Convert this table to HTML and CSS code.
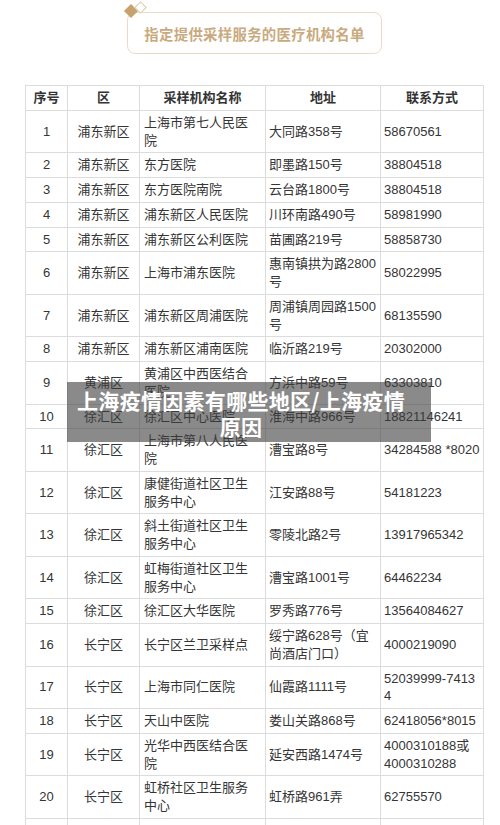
FILE: index.html
```html
<!DOCTYPE html>
<html lang="zh">
<head>
<meta charset="utf-8">
<link rel="stylesheet" href="styles.css">
</head>
<body>
<div class="page">
  <div class="title-wrap">
    <div class="title-box">
      <span class="deco deco-gold"></span>
      <span class="deco deco-white"></span>
      <span class="title-text">指定提供采样服务的医疗机构名单</span>
    </div>
  </div>
  <table class="list">
    <colgroup>
      <col class="c1"><col class="c2"><col class="c3"><col class="c4"><col class="c5">
    </colgroup>
    <thead>
      <tr><th>序号</th><th>区</th><th>采样机构名称</th><th>地址</th><th>联系方式</th></tr>
    </thead>
    <tbody>
      <tr><td class="ctr">1</td><td class="ctr">浦东新区</td><td>上海市第七人民医院</td><td>大同路358号</td><td>58670561</td></tr>
      <tr><td class="ctr">2</td><td class="ctr">浦东新区</td><td>东方医院</td><td>即墨路150号</td><td>38804518</td></tr>
      <tr><td class="ctr">3</td><td class="ctr">浦东新区</td><td>东方医院南院</td><td>云台路1800号</td><td>38804518</td></tr>
      <tr><td class="ctr">4</td><td class="ctr">浦东新区</td><td>浦东新区人民医院</td><td>川环南路490号</td><td>58981990</td></tr>
      <tr><td class="ctr">5</td><td class="ctr">浦东新区</td><td>浦东新区公利医院</td><td>苗圃路219号</td><td>58858730</td></tr>
      <tr><td class="ctr">6</td><td class="ctr">浦东新区</td><td>上海市浦东医院</td><td>惠南镇拱为路2800号</td><td>58022995</td></tr>
      <tr><td class="ctr">7</td><td class="ctr">浦东新区</td><td>浦东新区周浦医院</td><td>周浦镇周园路1500号</td><td>68135590</td></tr>
      <tr><td class="ctr">8</td><td class="ctr">浦东新区</td><td>浦东新区浦南医院</td><td>临沂路219号</td><td>20302000</td></tr>
      <tr><td class="ctr">9</td><td class="ctr">黄浦区</td><td>黄浦区中西医结合医院</td><td>方浜中路59号</td><td>63303810</td></tr>
      <tr><td class="ctr">10</td><td class="ctr">徐汇区</td><td>徐汇区中心医院</td><td>淮海中路966号</td><td>18821146241</td></tr>
      <tr><td class="ctr">11</td><td class="ctr">徐汇区</td><td>上海市第八人民医院</td><td>漕宝路8号</td><td>34284588 *8020</td></tr>
      <tr><td class="ctr">12</td><td class="ctr">徐汇区</td><td>康健街道社区卫生服务中心</td><td>江安路88号</td><td>54181223</td></tr>
      <tr><td class="ctr">13</td><td class="ctr">徐汇区</td><td>斜土街道社区卫生服务中心</td><td>零陵北路2号</td><td>13917965342</td></tr>
      <tr><td class="ctr">14</td><td class="ctr">徐汇区</td><td>虹梅街道社区卫生服务中心</td><td>漕宝路1001号</td><td>64462234</td></tr>
      <tr><td class="ctr">15</td><td class="ctr">徐汇区</td><td>徐汇区大华医院</td><td>罗秀路776号</td><td>13564084627</td></tr>
      <tr><td class="ctr">16</td><td class="ctr">长宁区</td><td>长宁区兰卫采样点</td><td>绥宁路628号（宜尚酒店门口）</td><td>4000219090</td></tr>
      <tr><td class="ctr">17</td><td class="ctr">长宁区</td><td>上海市同仁医院</td><td>仙霞路1111号</td><td class="brk">52039999-74134</td></tr>
      <tr><td class="ctr">18</td><td class="ctr">长宁区</td><td>天山中医院</td><td>娄山关路868号</td><td>62418056*8015</td></tr>
      <tr><td class="ctr">19</td><td class="ctr">长宁区</td><td>光华中西医结合医院</td><td>延安西路1474号</td><td>4000310188或4000310288</td></tr>
      <tr><td class="ctr">20</td><td class="ctr">长宁区</td><td>虹桥社区卫生服务中心</td><td>虹桥路961弄</td><td>62755570</td></tr>
      <tr class="tail"><td></td><td></td><td></td><td></td><td></td></tr>
    </tbody>
  </table>
  <div class="caption">上海疫情因素有哪些地区/上海疫情原因</div>
</div>
</body>
</html>
```

FILE: styles.css
```css
html, body {
  margin: 0;
  padding: 0;
  background: #ffffff;
}

.page {
  position: relative;
  width: 500px;
  height: 825px;
  overflow: hidden;
  font-family: "Liberation Sans", "Noto Sans CJK SC", sans-serif;
  color: #353535;
}

.title-wrap {
  display: flex;
  justify-content: center;
  padding-top: 12px;
}

.title-box {
  position: relative;
  box-sizing: border-box;
  width: 255px;
  height: 42px;
  margin-left: 9px;
  border: 1.5px solid #e9dcc7;
  border-radius: 8px;
  display: flex;
  align-items: center;
  justify-content: center;
}

.title-text {
  font-family: "Noto Sans CJK SC", sans-serif;
  font-size: 14.4px;
  font-weight: 700;
  color: #c9aa7e;
  letter-spacing: 0.3px;
}

.deco {
  position: absolute;
  transform: rotate(45deg);
}

.deco-gold {
  left: -2px;
  top: -7px;
  width: 10px;
  height: 10px;
  background: #c6a26e;
}

.deco-white {
  left: 8px;
  top: -10px;
  width: 7px;
  height: 7px;
  background: #ffffff;
  border: 1px solid #dcc8a6;
}

.list {
  margin-top: 31px;
  margin-left: 25px;
  width: 458px;
  border-collapse: collapse;
  table-layout: fixed;
  font-size: 13px;
  line-height: 17.75px;
}

.c1 { width: 42px; }
.c2 { width: 72px; }
.c3 { width: 126px; }
.c4 { width: 115px; }
.c5 { width: 103px; }

.list th,
.list td {
  border: 1px solid #dcdcdc;
  padding: 3px 4px;
  vertical-align: middle;
}

.list th {
  font-weight: 700;
  text-align: center;
  color: #333333;
}

.list td {
  text-align: left;
}

.list td:nth-child(3) {
  padding-right: 6px;
}

.list td:nth-child(4) {
  padding-left: 3px;
  padding-right: 2px;
}

.list td:nth-child(5) {
  padding-left: 3px;
  padding-right: 3px;
}

.list td.ctr {
  text-align: center;
}

.list td.brk {
  word-break: break-all;
}

.list tr.tail td {
  height: 24px;
}

.caption {
  position: absolute;
  left: 67px;
  top: 382px;
  width: 364px;
  height: 60px;
  box-sizing: border-box;
  padding: 5px 16px 0 0;
  background: rgba(60, 60, 60, 0.6);
  color: #ffffff;
  font-family: "Noto Sans CJK SC", sans-serif;
  font-weight: 700;
  font-size: 21px;
  line-height: 26px;
  text-align: center;
  letter-spacing: 0.3px;
}
```
